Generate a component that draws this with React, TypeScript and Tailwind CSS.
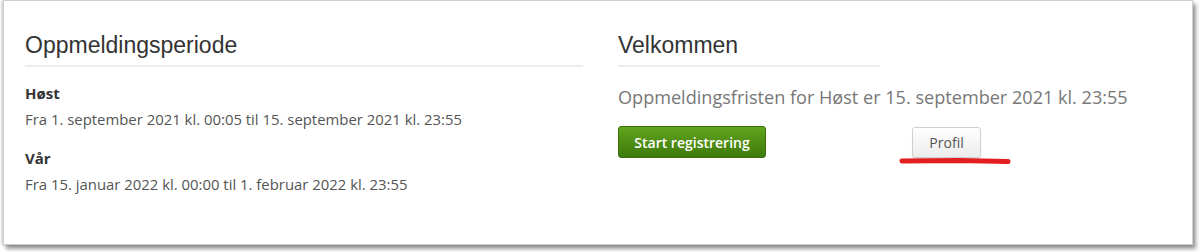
const periods = [
  { name: "Høst", text: "Fra 1. september 2021 kl. 00:05 til 15. september 2021 kl. 23:55" },
  { name: "Vår", text: "Fra 15. januar 2022 kl. 00:00 til 1. februar 2022 kl. 23:55" },
];

function Heading({ children }: { children: React.ReactNode }) {
  return (
    <h2 className="font-['Liberation_Sans',Arial,sans-serif] text-[23px] leading-[28px] text-[#333]">
      {children}
    </h2>
  );
}

export default function App() {
  return (
    <div className="w-[1200px] h-[252px] bg-white pl-[3px] font-['Open_Sans',sans-serif]">
      <div className="flex w-[1190px] h-[245px] border border-[#d0d0d0] bg-white pl-[21px] pt-[30px] shadow-[3px_4px_4px_rgba(0,0,0,0.4),-1px_0_3px_rgba(0,0,0,0.25)]">
        <div className="w-[558px]">
          <Heading>Oppmeldingsperiode</Heading>
          <div className="mt-[6px] border-t-2 border-[#ececec]" />
          <div className="mt-[16px] flex flex-col gap-[19px]">
            {periods.map((p) => (
              <div key={p.name}>
                <p className="text-[15px] leading-[20px] font-bold text-[#333]">{p.name}</p>
                <p className="mt-[6px] text-[14.9px] leading-[20px] text-[#555]">{p.text}</p>
              </div>
            ))}
          </div>
        </div>

        <div className="ml-[35px] flex-1">
          <Heading>Velkommen</Heading>
          <div className="mt-[6px] w-[262px] border-t-2 border-[#ececec]" />
          <p className="mt-[18px] text-[18.1px] leading-[24px] text-[#777]">
            Oppmeldingsfristen for Høst er 15. september 2021 kl. 23:55
          </p>
          <div className="mt-[17px] flex items-start">
            <button className="h-[32px] w-[148px] rounded-[3px] border border-[#3b6e10] bg-gradient-to-b from-[#62a41e] to-[#3e7a0b] text-[14px] font-semibold text-white">
              Start registrering
            </button>
            <div className="relative ml-[146px] mt-[1px]">
              <button className="h-[31px] w-[69px] rounded-[3px] border border-[#cfcfcf] bg-gradient-to-b from-white to-[#ececec] text-[14px] text-[#555] shadow-[0_1px_1px_rgba(0,0,0,0.12)]">
                Profil
              </button>
              <svg
                className="absolute left-[-13px] top-[29px]"
                width="114"
                height="10"
                viewBox="0 0 114 10"
              >
                <path
                  d="M3 5 L60 4.6 L109 5.6"
                  fill="none"
                  stroke="#e41e1e"
                  strokeWidth="5"
                  strokeLinecap="round"
                  strokeLinejoin="round"
                />
              </svg>
            </div>
          </div>
        </div>
      </div>
    </div>
  );
}
